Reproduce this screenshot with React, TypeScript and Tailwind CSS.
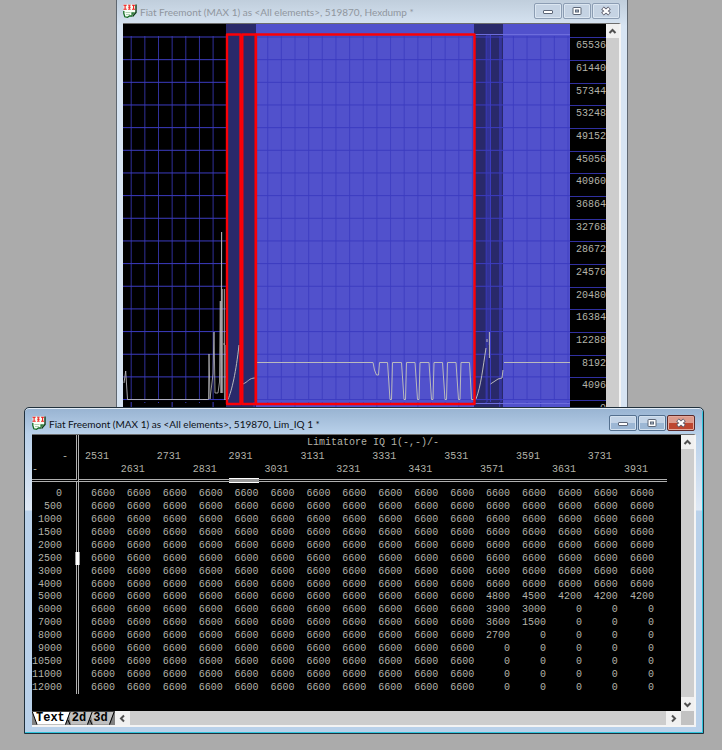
import clsx from "clsx"

const scale = [
  65536, 61440, 57344, 53248, 49152, 45056, 40960, 36864, 32768, 28672, 24576, 20480, 16384, 12288, 8192, 4096, 0,
]

const columns = [2531, 2631, 2731, 2831, 2931, 3031, 3131, 3231, 3331, 3431, 3531, 3571, 3591, 3631, 3731, 3931]

const full = Array<number>(16).fill(6600)
const limited = (tail: number[]) => [...full.slice(0, 11), ...tail]

const rows: { rpm: number; values: number[] }[] = [
  { rpm: 0, values: full },
  { rpm: 500, values: full },
  { rpm: 1000, values: full },
  { rpm: 1500, values: full },
  { rpm: 2000, values: full },
  { rpm: 2500, values: full },
  { rpm: 3000, values: full },
  { rpm: 4000, values: full },
  { rpm: 5000, values: limited([4800, 4500, 4200, 4200, 4200]) },
  { rpm: 6000, values: limited([3900, 3000, 0, 0, 0]) },
  { rpm: 7000, values: limited([3600, 1500, 0, 0, 0]) },
  { rpm: 8000, values: limited([2700, 0, 0, 0, 0]) },
  { rpm: 9000, values: limited([0, 0, 0, 0, 0]) },
  { rpm: 10500, values: limited([0, 0, 0, 0, 0]) },
  { rpm: 11000, values: limited([0, 0, 0, 0, 0]) },
  { rpm: 12000, values: limited([0, 0, 0, 0, 0]) },
]

function AppIcon() {
  return (
    <svg width="14" height="14" viewBox="0 0 14 14" className="shrink-0" aria-hidden="true">
      <path d="M0.5 0.5H13V9L9.5 12.5 7 12 5 13.5 1 12.5z" fill="#f6fff6" />
      <path d="M13 0.5V8.5L9.5 12.5" stroke="#0b3b16" strokeWidth="1.4" fill="none" />
      <path d="M8.3 8.3H12.2L8.5 12z" fill="#2d7a39" />
      <path d="M0.8 7V9.5L1.8 12.8 4.5 13.3 6.5 12H9" stroke="#126b22" strokeWidth="1.3" fill="none" />
      <path d="M2.5 8.5H7.5M3 10.5H7" stroke="#9cc5a0" strokeWidth="0.8" />
      <path d="M0.5 1.2H3.7M2.1 1.2V5.2M0.5 5.2H3.7M9 1.2H12.2M10.6 1.2V5.2M9 5.2H12.2" stroke="#f01c1c" strokeWidth="1.1" />
      <path d="M5 1.2H7.7M6.4 1.2V5.2M5 3.2H7.8M5 5.2H7.7" stroke="#f01c1c" strokeWidth="0.9" />
    </svg>
  )
}

function CaptionButton({ kind, active }: { kind: "minimize" | "maximize" | "close"; active: boolean }) {
  return (
    <button
      aria-label={kind}
      className={clsx(
        "flex h-4 w-7 items-center justify-center rounded-[2px] border",
        !active && "border-[#8c9db3] bg-[#c5d3e3] shadow-[inset_0_0_0_1px_#dbe6f1]",
        active &&
          kind !== "close" &&
          "border-[#54708f] bg-linear-to-b from-[#c3d4e7] from-50% to-[#9cb7d4] to-50% shadow-[inset_0_0_0_1px_#d3e1ef]",
        active &&
          kind === "close" &&
          "border-[#5c2a2a] bg-linear-to-b from-[#dc9a8c] from-50% to-[#bd4630] to-50% shadow-[inset_0_0_0_1px_#e5a99c]",
      )}
    >
      <svg width="12" height="10" viewBox="0 0 12 10" fill="none" aria-hidden="true">
        {kind === "minimize" && <rect x="1.5" y="4.5" width="9" height="3" rx="0.5" fill="#fff" stroke="#5c6677" />}
        {kind === "maximize" && (
          <>
            <rect x="2" y="1.5" width="8" height="7" rx="0.5" fill="#fff" stroke="#5c6677" />
            <rect x="4.5" y="4" width="3" height="2" fill="#a8b8ca" stroke="#5c6677" />
          </>
        )}
        {kind === "close" && (
          <>
            <path d="M2.5 2l7 6M9.5 2l-7 6" stroke="#5c5c6b" strokeWidth="4" />
            <path d="M3 2.4l6 5.2M9 2.4L3 7.6" stroke="#fff" strokeWidth="2.2" />
          </>
        )}
      </svg>
    </button>
  )
}

function TitleBar({ title, active = false }: { title: string; active?: boolean }) {
  return (
    <header className="flex h-[26px] items-center gap-[3px] pt-1 pr-px">
      <AppIcon />
      <h1
        className={clsx(
          "min-w-0 flex-1 overflow-hidden pt-px font-[Lato,sans-serif] text-[10px] leading-4 whitespace-nowrap",
          active ? "text-[#0c1016]" : "text-[#90969e]",
        )}
      >
        {title}
      </h1>
      <div className="flex gap-px">
        <CaptionButton kind="minimize" active={active} />
        <CaptionButton kind="maximize" active={active} />
        <CaptionButton kind="close" active={active} />
      </div>
    </header>
  )
}

const arrows = {
  up: "M1.5 6L4.5 3l3 3",
  down: "M1.5 3l3 3 3-3",
  left: "M6 1.5L3 4.5l3 3",
  right: "M3 1.5l3 3-3 3",
}

function ScrollButton({ direction }: { direction: keyof typeof arrows }) {
  const vertical = direction === "up" || direction === "down"
  return (
    <button
      aria-label={`Scroll ${direction}`}
      className={clsx("flex h-[14px] shrink-0 items-center justify-center bg-[#f0f0f0]", vertical ? "w-[13px]" : "w-[15px]")}
    >
      <svg width="9" height="9" viewBox="0 0 9 9" fill="none" aria-hidden="true">
        <path d={arrows[direction]} stroke="#505050" strokeWidth="2" />
      </svg>
    </button>
  )
}

const GRID_TOP = 37
const GRID_STEP_Y = 22.66
const GRID_STEP_X = 13.65

function HexdumpPlot() {
  const horizontal = Array.from({ length: 17 }, (_, i) => GRID_TOP + i * GRID_STEP_Y)
  const vertical = Array.from({ length: 33 }, (_, i) => 131.2 + i * GRID_STEP_X)
  const pulses = [389, 403, 416.5, 430.5, 444, 457.5]
    .map((x) => `H${x - 1.5}L${x + 1} 399.5H${x + 2.5}L${x + 3.5} 362.5`)
    .join("")

  return (
    <svg
      viewBox="123 24 447 383"
      preserveAspectRatio="none"
      className="h-[383px] min-w-0 flex-1"
      role="img"
      aria-label="Hexdump values"
    >
      <rect x="226" y="24" width="30" height="383" fill="#29296a" />
      <rect x="256" y="24" width="218" height="383" fill="#5151cc" />
      <rect x="474" y="24" width="29" height="383" fill="#29296a" />
      <rect x="503" y="24" width="67" height="383" fill="#5151cc" />

      <g stroke="#3c3cc0">
        {horizontal.map((y) => (
          <path key={y} d={`M123 ${y}H226M257 ${y}H570`} strokeWidth="1" />
        ))}
        {vertical.map((x, i) => (
          <g key={x}>
            {(x < 226 || x > 257) && <path d={`M${x} 36V400`} opacity="0.8" />}
            <path d={`M${x} 402V${i % 3 === 0 ? 407 : 403}`} />
          </g>
        ))}
        <path d="M487 34V402M489 34V345M490.5 34V402M501 36V402" />
      </g>
      <path d="M474 34.5H570M474 403.5H570" stroke="#6c6cdc" />

      <g fill="none" stroke="#b9b9bd" strokeLinejoin="round">
        <path d="M124 383L125.7 371L127.5 399.5H207" strokeWidth="0.9" />
        <path d="M203 399.5H208.5L209 354L210 399L213 374L214 332L215 393H218L219.5 382L220.3 301L221 393L221.6 232L221.6 393M222.7 393V289M223 344H225M224.6 289V400M225.8 345V400" strokeWidth="0.8" />
        <path d="M228 399.5C232 390 236 372 239 345" />
        <path d="M243 384C248 382 249 378 255 378" />
        <path d={`M257 362.5H373L374.5 370L376.5 375H378.5L379.5 362.5${pulses}H469.5L471.5 399.5H474`} />
        <path d="M476 399C481 386 483 367 486 348M487 342V339M489.4 332V358" />
        <path d="M490.5 384L498 379L502 378L503 370" />
        <path d="M504 362.5H570" />
      </g>

      <g fill="none" stroke="#fb0006" strokeWidth="2.4" strokeLinejoin="round">
        <rect x="227" y="34.5" width="13.5" height="369.5" />
        <rect x="242.3" y="34.5" width="13.5" height="369.5" />
        <rect x="256" y="34.5" width="218.5" height="369.5" />
      </g>
    </svg>
  )
}

function HexdumpWindow() {
  return (
    <section className="absolute top-0 right-[94px] left-[116px] border-x border-[#5f6770] bg-[#d7e4f2] bg-linear-to-b from-[#c0cedc] to-[#d7e4f2] to-[26px] px-1.5">
      <div className="-mt-1">
        <TitleBar title="Fiat Freemont (MAX 1) as <All elements>, 519870, Hexdump *" />
      </div>
      <div className="mt-px flex h-[394px] items-start overflow-hidden border-t border-r-2 border-[#6d6d6d] border-r-[#f4f4f4] bg-black">
        <HexdumpPlot />
        <ul className="w-9 shrink-0 pt-[13px] text-right text-[10px] leading-4 text-[#b2b2a8]">
          {scale.map((value, i) => (
            <li key={value} className={clsx("border-t border-[#3030a0]", i % 3 === 2 ? "h-[22px]" : "h-[23px]")}>
              {value}
            </li>
          ))}
        </ul>
        <div className="flex w-[13px] shrink-0 flex-col self-stretch bg-[#cdcdcd]">
          <ScrollButton direction="up" />
        </div>
      </div>
    </section>
  )
}

function MapTable() {
  return (
    <table className="h-[259px] w-full table-fixed border-separate border-spacing-0 text-right text-[10px] leading-3 text-[#b2b2a8]">
      <colgroup>
        <col className="w-[47px]" />
        {columns.map((column) => (
          <col key={column} />
        ))}
        <col className="w-[13px]" />
      </colgroup>
      <thead>
        <tr className="h-[15px]">
          <td className="border-r-3 border-double border-[#b0b0b0]" />
          <th colSpan={17} className="text-center font-normal">
            Limitatore IQ 1(-,-)/-
          </th>
        </tr>
        <tr className="h-8 leading-[13px]">
          <td className="border-r-3 border-b-3 border-double border-[#b0b0b0] pr-2 align-top">
            <div>-</div>
            <div className="text-left">-</div>
          </td>
          {columns.map((column, i) => (
            <th
              key={column}
              scope="col"
              className={clsx(
                "relative border-b-3 border-double border-[#b0b0b0] pr-1.5 align-top font-normal",
                i % 2 === 1 && "pt-[13px]",
              )}
            >
              {column}
              {column === 2931 && (
                <span className="absolute right-0 -bottom-1 h-[5px] w-[30px] border-y border-white bg-[#999]" />
              )}
            </th>
          ))}
          <td className="border-b-3 border-double border-[#b0b0b0]" />
        </tr>
      </thead>
      <tbody>
        <tr className="h-1.5">
          <td className="h-1.5 border-r-3 border-double border-[#b0b0b0]" />
        </tr>
        {rows.map(({ rpm, values }) => (
          <tr key={rpm}>
            <th scope="row" className="relative border-r-3 border-double border-[#b0b0b0] pr-[14px] font-normal">
              <span className="flex justify-end">{rpm}</span>
              {rpm === 2500 && (
                <span className="absolute inset-y-0 -right-1 w-[5px] border-x border-[#999] bg-white" />
              )}
            </th>
            {values.map((value, i) => (
              <td key={columns[i]}>{value}</td>
            ))}
          </tr>
        ))}
      </tbody>
    </table>
  )
}

function ViewTabs() {
  return (
    <div className="relative h-[14px] w-[83px] shrink-0 bg-[#808080]">
      <svg width="83" height="14" viewBox="0 0 83 14" className="absolute inset-0" aria-hidden="true">
        <path d="M58 0h24l-5 13.5H61z" fill="#c0c0c0" />
        <path d="M36 0h24l-5 13.5H39z" fill="#c0c0c0" />
        <path d="M0 0h38l-5 13.5H5z" fill="#fff" />
        <path d="M0 0l5 13.5M38.5 0l-5 13.5M36 9l2 4.5M60.5 0l-5 13.5M58 9l2 4.5M82.5 0l-5 13.5" stroke="#000" fill="none" />
        <path d="M0 0.5h83" stroke="#404040" />
      </svg>
      <div className="relative flex h-full items-center gap-[7px] pl-1 text-xs leading-[14px] font-bold text-black">
        <button>Text</button>
        <button>2d</button>
        <button>3d</button>
      </div>
    </div>
  )
}

function MapWindow() {
  return (
    <section className="absolute top-[407px] right-[18px] left-6 rounded-t-[5px] border border-[#20303c] bg-[#b9d1ea] bg-linear-[to_bottom,#98b3d1_0px,#b9d1ea_26px,#dfe9f5_102px,#b9d1ea_103px] px-[7px] pb-[6px] shadow-[inset_0_1px_0_#e4eef8,inset_-1px_-1px_0_#2fc4dc]">
      <TitleBar title="Fiat Freemont (MAX 1) as <All elements>, 519870, Lim_IQ 1 *" active />
      <div className="border-t border-r-2 border-b-2 border-[#6d6d6d] border-r-[#f4f4f4] border-b-[#f4f4f4]">
        <div className="flex bg-black">
          <div className="h-[276px] min-w-0 flex-1 pr-[14px]">
            <MapTable />
          </div>
          <div className="flex w-[13px] shrink-0 flex-col justify-between bg-[#cdcdcd]">
            <ScrollButton direction="up" />
            <ScrollButton direction="down" />
          </div>
        </div>
        <div className="flex h-[14px] bg-[#cdcdcd]">
          <ViewTabs />
          <ScrollButton direction="left" />
          <div className="flex-1" />
          <ScrollButton direction="right" />
          <div className="w-[13px] bg-[#c2c2c2]" />
        </div>
      </div>
    </section>
  )
}

export default function App() {
  return (
    <main className="relative min-h-screen overflow-hidden bg-[#ababab] font-['Liberation_Mono',monospace]">
      <HexdumpWindow />
      <MapWindow />
    </main>
  )
}
